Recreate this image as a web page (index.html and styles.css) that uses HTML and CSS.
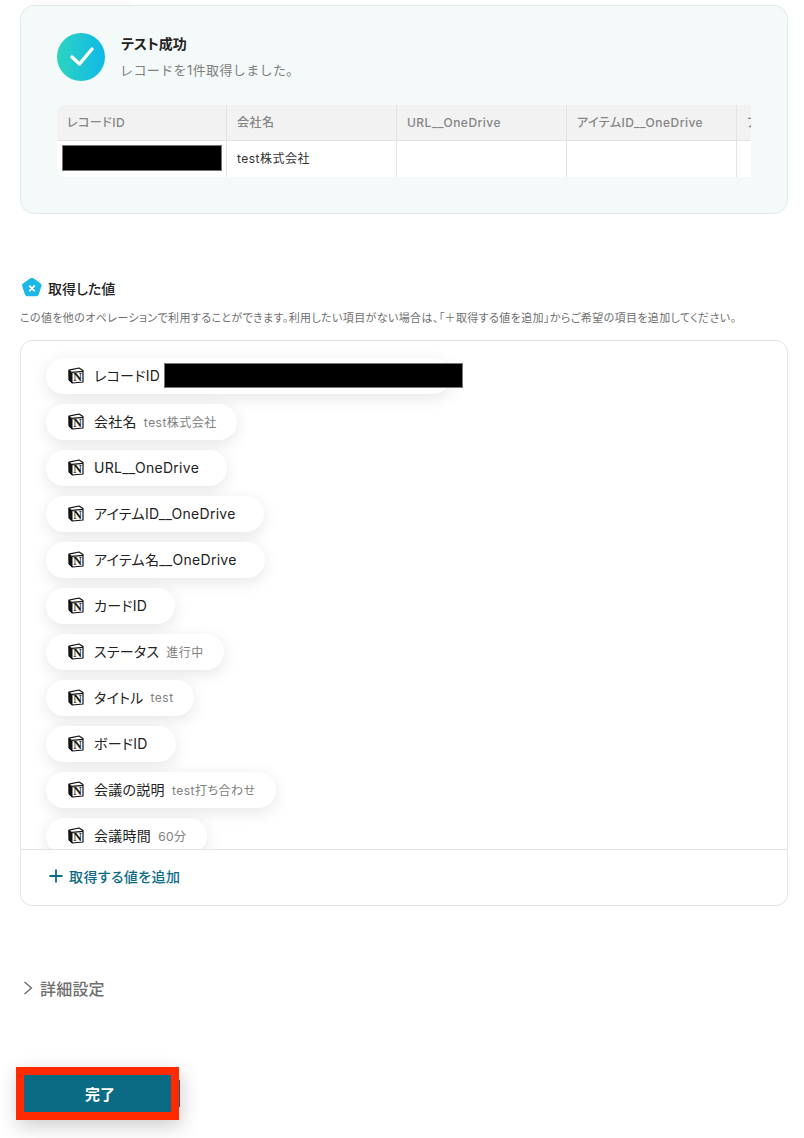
FILE: index.html
```html
<!DOCTYPE html>
<html lang="ja">
<head>
  <meta charset="UTF-8">
  <title>テスト成功</title>
  <link rel="stylesheet" href="styles.css">
</head>
<body>
  <svg class="sprite" width="0" height="0">
    <symbol id="notion" viewBox="0 0 16 17">
      <path d="M1 3.200 11 1 15 3.600V15L4.400 16 1.200 13Z" fill="#fff" stroke="#111" stroke-width="1.200" stroke-linejoin="round"/>
      <path d="M1 3.200 4 5.600V16L1.200 13Z" fill="#111" stroke="#111" stroke-width="1" stroke-linejoin="round"/>
      <path d="M4 5.400 15 4.400" fill="none" stroke="#111" stroke-width="1.400"/>
      <text x="9.600" y="14.300" text-anchor="middle" class="notion-n">N</text>
    </symbol>
  </svg>

  <div class="top-shadow"></div>

  <section class="result-card">
    <div class="result-head">
      <div class="result-icon">
        <svg width="48" height="48" viewBox="0 0 48 48">
          <path d="M15 24 22.500 31 35 16" fill="none" stroke="#fff" stroke-width="3.400" stroke-linecap="round" stroke-linejoin="round"/>
        </svg>
      </div>
      <div class="result-text">
        <div class="result-title">テスト成功</div>
        <div class="result-sub">レコードを1件取得しました。</div>
      </div>
    </div>
    <div class="table-wrap">
      <div class="table-row table-header">
        <div class="cell">レコードID</div>
        <div class="cell">会社名</div>
        <div class="cell">URL__OneDrive</div>
        <div class="cell">アイテムID__OneDrive</div>
        <div class="cell">アイテム名__OneDrive</div>
      </div>
      <div class="table-row table-body">
        <div class="cell cell-masked"><span class="mask mask-table"></span></div>
        <div class="cell">test株式会社</div>
        <div class="cell"></div>
        <div class="cell"></div>
        <div class="cell"></div>
      </div>
    </div>
  </section>

  <div class="values-head">
    <svg class="values-icon" width="20" height="20" viewBox="1 1 18 18">
      <path d="M8.600 1.300a2.400 2.400 0 0 1 2.800 0l6.200 4.500a2.400 2.400 0 0 1 .9 2.700l-2.400 7.200a2.400 2.400 0 0 1-2.300 1.700H5.900a2.400 2.400 0 0 1-2.300-1.700L1.200 8.500a2.400 2.400 0 0 1 .9-2.700Z" fill="#1bb7e6"/>
      <path d="M8 8.300 12 12.300M12 8.300 8 12.300" stroke="#fff" stroke-width="1.700" stroke-linecap="round"/>
    </svg>
    <span class="values-title">取得した値</span>
  </div>
  <p class="values-desc">この値を他のオペレーションで利用することができます。利用したい項目がない場合は、「＋取得する値を追加」からご希望の項目を追加してください。</p>

  <section class="values-box">
    <div class="pill-list">
      <div class="pill pill-wide"><svg class="pill-icon"><use href="#notion"/></svg><span class="pill-name">レコードID</span><span class="mask mask-pill"></span></div>
      <div class="pill"><svg class="pill-icon"><use href="#notion"/></svg><span class="pill-name">会社名</span><span class="pill-value">test株式会社</span></div>
      <div class="pill"><svg class="pill-icon"><use href="#notion"/></svg><span class="pill-name">URL__OneDrive</span></div>
      <div class="pill"><svg class="pill-icon"><use href="#notion"/></svg><span class="pill-name">アイテムID__OneDrive</span></div>
      <div class="pill"><svg class="pill-icon"><use href="#notion"/></svg><span class="pill-name">アイテム名__OneDrive</span></div>
      <div class="pill"><svg class="pill-icon"><use href="#notion"/></svg><span class="pill-name">カードID</span></div>
      <div class="pill"><svg class="pill-icon"><use href="#notion"/></svg><span class="pill-name">ステータス</span><span class="pill-value">進行中</span></div>
      <div class="pill"><svg class="pill-icon"><use href="#notion"/></svg><span class="pill-name">タイトル</span><span class="pill-value">test</span></div>
      <div class="pill"><svg class="pill-icon"><use href="#notion"/></svg><span class="pill-name">ボードID</span></div>
      <div class="pill"><svg class="pill-icon"><use href="#notion"/></svg><span class="pill-name">会議の説明</span><span class="pill-value">test打ち合わせ</span></div>
      <div class="pill"><svg class="pill-icon"><use href="#notion"/></svg><span class="pill-name">会議時間</span><span class="pill-value">60分</span></div>
    </div>
    <div class="add-row">
      <svg width="14" height="14" viewBox="0 0 14 14">
        <path d="M7 .5V13.500M.5 7H13.500" stroke="#0b6b84" stroke-width="1.800"/>
      </svg>
      <span>取得する値を追加</span>
    </div>
  </section>

  <div class="details">
    <svg width="10" height="14" viewBox="0 0 10 14">
      <path d="M1.500 1 8.500 7 1.500 13" fill="none" stroke="#666" stroke-width="1.300"/>
    </svg>
    <span>詳細設定</span>
  </div>

  <div class="submit-wrap">
    <button class="submit-btn">完了</button>
  </div>
</body>
</html>
```

FILE: styles.css
```css
html, body {
  margin: 0;
  padding: 0;
  background: #fff;
  color: #222;
  font-family: 'Inter', 'Noto Sans CJK JP', sans-serif;
  font-feature-settings: "palt";
  overflow: hidden;
}
body {
  width: 804px;
  height: 1138px;
  box-sizing: border-box;
  padding: 5px 16px 0 20px;
}
.sprite {
  display: block;
}
.notion-n {
  font-family: 'Liberation Serif', serif;
  font-weight: 700;
  font-size: 12px;
  fill: #111;
}
.top-shadow {
  height: 0;
  width: 100px;
  margin-left: 10px;
  box-shadow: 0 0 8px 2px #0000000d;
}
.mask {
  display: block;
  background: #000;
  border: 1px solid #777;
  box-sizing: border-box;
}

/* test result */
.result-card {
  height: 209px;
  box-sizing: border-box;
  background: #f4f9f9;
  border: 1px solid #e3e8e9;
  border-radius: 14px;
  padding: 27px 36px 0;
}
.result-head {
  display: flex;
  gap: 16px;
  height: 72px;
}
.result-icon {
  width: 48px;
  height: 48px;
  border-radius: 50%;
  background: linear-gradient(90deg, #2dd4bf, #0fb9e8);
}
.result-title {
  font-size: 14px;
  font-weight: 700;
  line-height: 20px;
  margin-top: 1px;
  color: #222;
}
.result-sub {
  font-size: 13px;
  font-feature-settings: normal;
  line-height: 18px;
  margin-top: 7px;
  margin-left: -1px;
  color: #808080;
  letter-spacing: 0.03em;
}
.table-wrap {
  width: 694px;
  overflow: hidden;
  border-radius: 8px 0 0 8px;
}
.table-row {
  display: flex;
}
.cell {
  flex: 0 0 170px;
  box-sizing: border-box;
  padding: 0 10px;
  border-right: 1px solid #e3e3e3;
  white-space: nowrap;
  overflow: hidden;
  font-size: 12px;
  letter-spacing: 0.04em;
}
.table-header {
  background: #f2f2f2;
  height: 36px;
  border-bottom: 1px solid #e3e3e3;
  box-sizing: border-box;
  color: #858585;
  font-weight: 500;
  line-height: 35px;
}
.table-body {
  background: #fff;
  height: 36px;
  line-height: 36px;
  color: #333;
}
.cell-masked {
  padding: 4px 4px 0 5px;
}
.mask-table {
  width: 160px;
  height: 26px;
}

/* values */
.values-head {
  display: flex;
  align-items: center;
  gap: 6px;
  margin: 63px 0 0 2px;
  height: 22px;
}
.values-title {
  font-size: 14px;
  font-weight: 500;
  color: #222;
}
.values-desc {
  margin: 11px 0 0;
  font-size: 11px;
  letter-spacing: 0.38px;
  line-height: 16px;
  color: #6f6f6f;
  white-space: nowrap;
}
.values-box {
  margin-top: 14px;
  height: 566px;
  box-sizing: border-box;
  border: 1px solid #e3e3e3;
  border-radius: 12px;
  display: flex;
  flex-direction: column;
}
.pill-list {
  height: 508px;
  overflow: hidden;
  padding: 17px 0 0 25px;
  box-sizing: border-box;
  display: flex;
  flex-direction: column;
  align-items: flex-start;
  gap: 10px;
  flex: none;
}
.pill {
  display: flex;
  align-items: center;
  flex: none;
  height: 36px;
  box-sizing: border-box;
  padding: 0 20px 2px 22px;
  border-radius: 18px;
  background: #fff;
  box-shadow: 0 4px 16px #0000001a;
}
.pill-wide {
  width: 405px;
  padding-right: 0;
}
.pill-icon {
  width: 16px;
  height: 17px;
  margin-right: 10px;
  flex: none;
}
.pill-name {
  font-size: 14px;
  color: #222;
  letter-spacing: 0.02em;
  white-space: nowrap;
}
.pill-name:last-child {
  margin-right: 8px;
}
.pill-value {
  font-size: 12px;
  color: #808080;
  margin-left: 7px;
  letter-spacing: 0.04em;
  white-space: nowrap;
}
.mask-pill {
  width: 299px;
  height: 25px;
  margin: 1px 0 0 4px;
  flex: none;
}
.add-row {
  flex: 1;
  border-top: 1px solid #e3e3e3;
  display: flex;
  align-items: center;
  gap: 6px;
  padding: 0 0 4px 28px;
  font-size: 14px;
  letter-spacing: 0.4px;
  font-weight: 500;
  color: #0b6b84;
}

/* bottom */
.details {
  display: flex;
  align-items: center;
  gap: 7px;
  margin: 70px 0 0 3px;
  height: 24px;
  font-size: 16px;
  letter-spacing: 0.2px;
  font-weight: 500;
  color: #6f6f6f;
}
.submit-wrap {
  margin: 67px 0 0 -4px;
}
.submit-btn {
  display: block;
  width: 163px;
  height: 53px;
  box-sizing: border-box;
  border: 8px solid #ff2a00;
  background: #0b6b84;
  color: #fff;
  font-family: inherit;
  font-feature-settings: inherit;
  font-size: 15px;
  font-weight: 700;
  padding: 0 0 0 5px;
  box-shadow: 14px 0 0 -13px #0b5a70, 2px 6px 20px #00000033;
}
```
